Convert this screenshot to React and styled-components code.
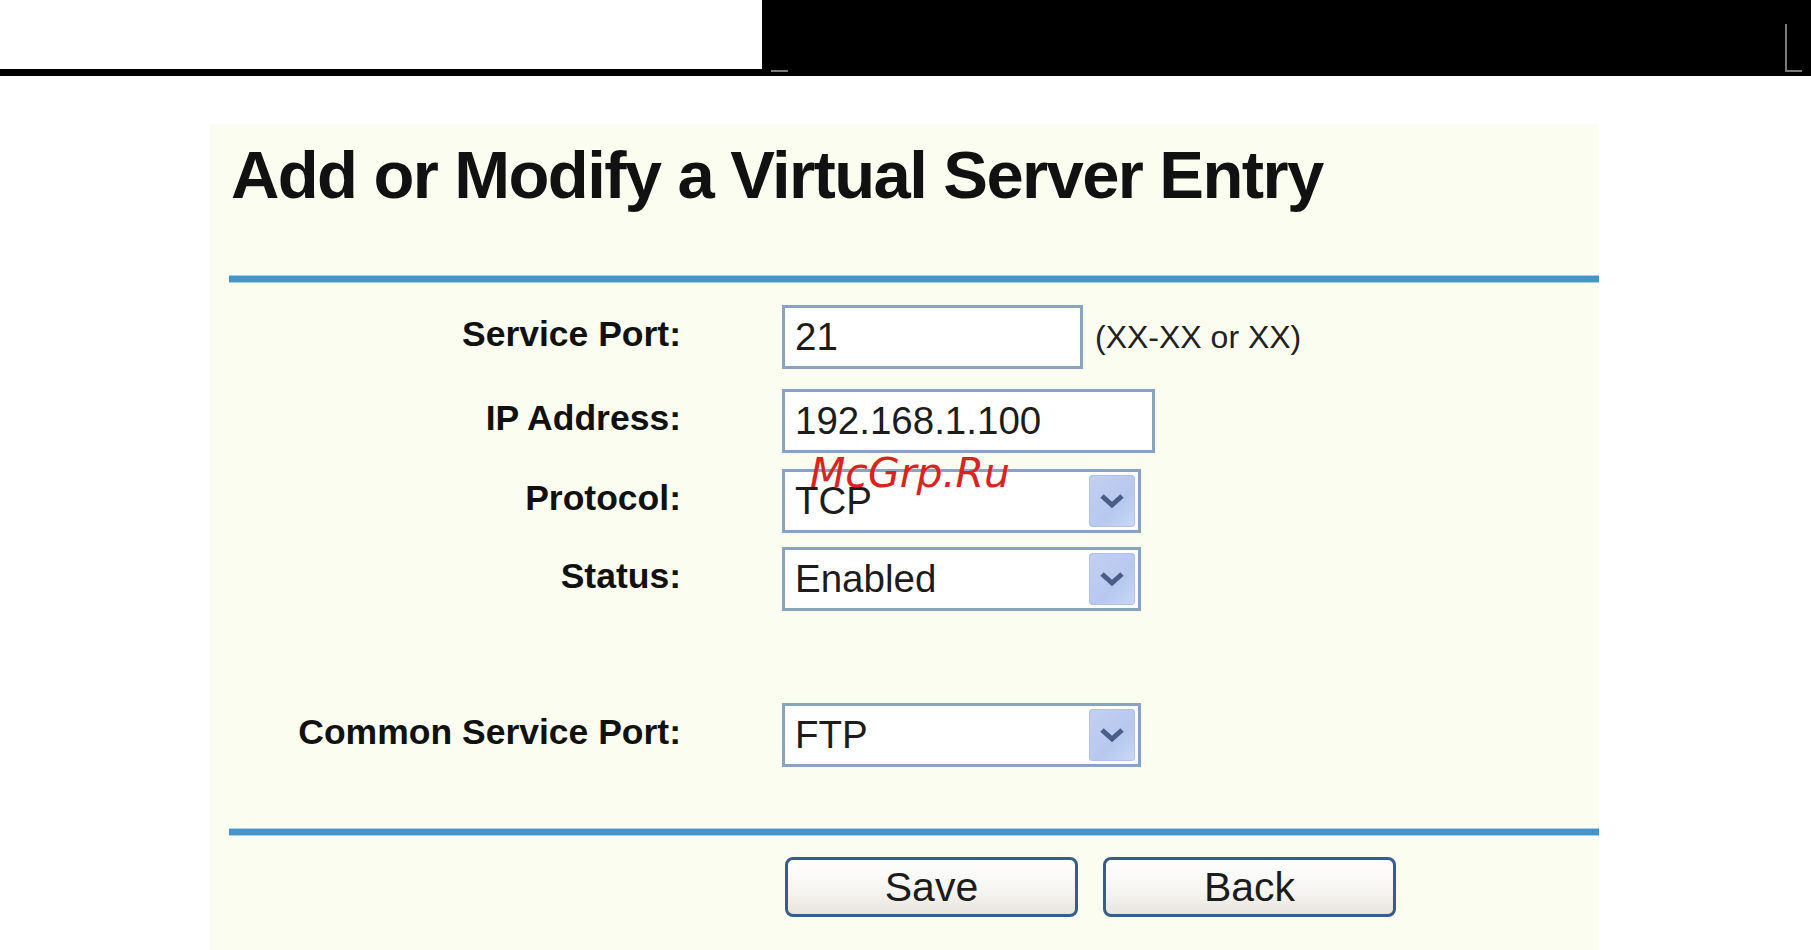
import React from "react";
import styled, { createGlobalStyle } from "styled-components";

const GlobalStyle = createGlobalStyle`
  html, body {
    margin: 0;
    padding: 0;
    background: #ffffff;
    overflow: hidden;
  }
  body {
    font-family: "Liberation Sans", Arial, sans-serif;
  }
`;

const Page = styled.div`
  width: 1811px;
  height: 950px;
  display: flex;
  flex-direction: column;
`;

const TopBar = styled.div`
  display: flex;
  height: 76px;
`;

const WhiteTab = styled.div`
  width: 762px;
  height: 69px;
  background: #ffffff;
  border-bottom: 7px solid #000000;
`;

const BlackBar = styled.div`
  position: relative;
  flex: 1;
  background: #000000;
`;

const Mark = styled.span`
  position: absolute;
  background: #7a7a7a;
`;

const Panel = styled.div`
  margin: 48px 0 0 210px;
  width: 1389px;
  flex: 1;
  background: #fbfdf0;
  display: flex;
  flex-direction: column;
`;

const Title = styled.h1`
  margin: 0;
  padding: 10px 0 0 21px;
  font-family: "Liberation Sans", Arial, sans-serif;
  font-size: 67px;
  line-height: 82px;
  letter-spacing: -1.6px;
  font-weight: bold;
  color: #111111;
`;

const Rule = styled.div`
  margin: ${(p) => p.$top}px 0 0 19px;
  height: 6px;
  background: #4395cb;
  box-shadow: 0 1px 0 #a9cfe6, 0 -1px 0 #a9cfe6;
`;

const Row = styled.div`
  display: grid;
  grid-template-columns: 471px auto;
  column-gap: 101px;
  align-items: center;
  margin-top: ${(p) => p.$top}px;
`;

const Label = styled.div`
  text-align: right;
  padding-bottom: 6px;
  font-size: 35.5px;
  font-weight: bold;
  color: #111111;
`;

const Field = styled.div`
  display: flex;
  align-items: center;
  gap: 12px;
`;

const TextBox = styled.div`
  box-sizing: border-box;
  width: ${(p) => p.$w}px;
  height: 64px;
  border: 3px solid #89a3c2;
  background: #ffffff;
  padding-left: 10px;
  display: flex;
  align-items: center;
  font-size: 38.5px;
  color: #1c1c1c;
`;

const Hint = styled.span`
  font-size: 32px;
  color: #222222;
`;

const SelectBox = styled.div`
  box-sizing: border-box;
  width: 359px;
  height: 64px;
  border: 3px solid #89a3c2;
  background: #ffffff;
  padding: 0 3px 0 10px;
  display: flex;
  align-items: center;
  justify-content: space-between;
  font-size: 38.5px;
  color: #1c1c1c;
`;

const ArrowButton = styled.div`
  width: 46px;
  height: 52px;
  border-radius: 4px;
  background: linear-gradient(135deg, #c4d0f2 0%, #b7c8ef 60%, #c9d8f6 100%);
  box-shadow: inset 0 0 0 1px #b2c2ea;
  display: flex;
  align-items: center;
  justify-content: center;
`;

const ButtonRow = styled.div`
  display: flex;
  gap: 25px;
  margin: 22px 0 0 575px;
`;

const Button = styled.button`
  box-sizing: border-box;
  width: 293px;
  height: 60px;
  border: 3px solid #3b5a8d;
  border-radius: 8px;
  background: linear-gradient(180deg, #ffffff 0%, #f5f4f0 60%, #e6e4dc 100%);
  font-family: "Liberation Sans", Arial, sans-serif;
  font-size: 41px;
  color: #1c1c1c;
  padding: 0;
`;

const Watermark = styled.span`
  position: absolute;
  left: 810px;
  top: 449px;
  font-family: "DejaVu Sans", sans-serif;
  font-style: italic;
  font-size: 41px;
  color: #da2320;
  pointer-events: none;
`;

function Chevron() {
  return (
    <svg width="26" height="18" viewBox="0 0 26 18">
      <path d="M3 4 L13 13 L23 4" fill="none" stroke="#4a5d86" strokeWidth="5" />
    </svg>
  );
}

function Select({ value }) {
  return (
    <SelectBox>
      <span>{value}</span>
      <ArrowButton>
        <Chevron />
      </ArrowButton>
    </SelectBox>
  );
}

export default function App() {
  return (
    <Page>
      <GlobalStyle />
      <TopBar>
        <WhiteTab />
        <BlackBar>
          <Mark style={{ left: 9, top: 70, width: 17, height: 2 }} />
          <Mark style={{ left: 1023, top: 24, width: 2, height: 48 }} />
          <Mark style={{ left: 1023, top: 70, width: 17, height: 2 }} />
        </BlackBar>
      </TopBar>
      <Panel>
        <Title>Add or Modify a Virtual Server Entry</Title>
        <Rule $top={60} />
        <Row $top={23}>
          <Label>Service Port:</Label>
          <Field>
            <TextBox $w={301}>21</TextBox>
            <Hint>(XX-XX or XX)</Hint>
          </Field>
        </Row>
        <Row $top={20}>
          <Label>IP Address:</Label>
          <Field>
            <TextBox $w={373}>192.168.1.100</TextBox>
          </Field>
        </Row>
        <Row $top={16}>
          <Label>Protocol:</Label>
          <Field>
            <Select value="TCP" />
          </Field>
        </Row>
        <Row $top={14}>
          <Label>Status:</Label>
          <Field>
            <Select value="Enabled" />
          </Field>
        </Row>
        <Row $top={92}>
          <Label>Common Service Port:</Label>
          <Field>
            <Select value="FTP" />
          </Field>
        </Row>
        <Rule $top={62} />
        <ButtonRow>
          <Button>Save</Button>
          <Button>Back</Button>
        </ButtonRow>
      </Panel>
      <Watermark>McGrp.Ru</Watermark>
    </Page>
  );
}
